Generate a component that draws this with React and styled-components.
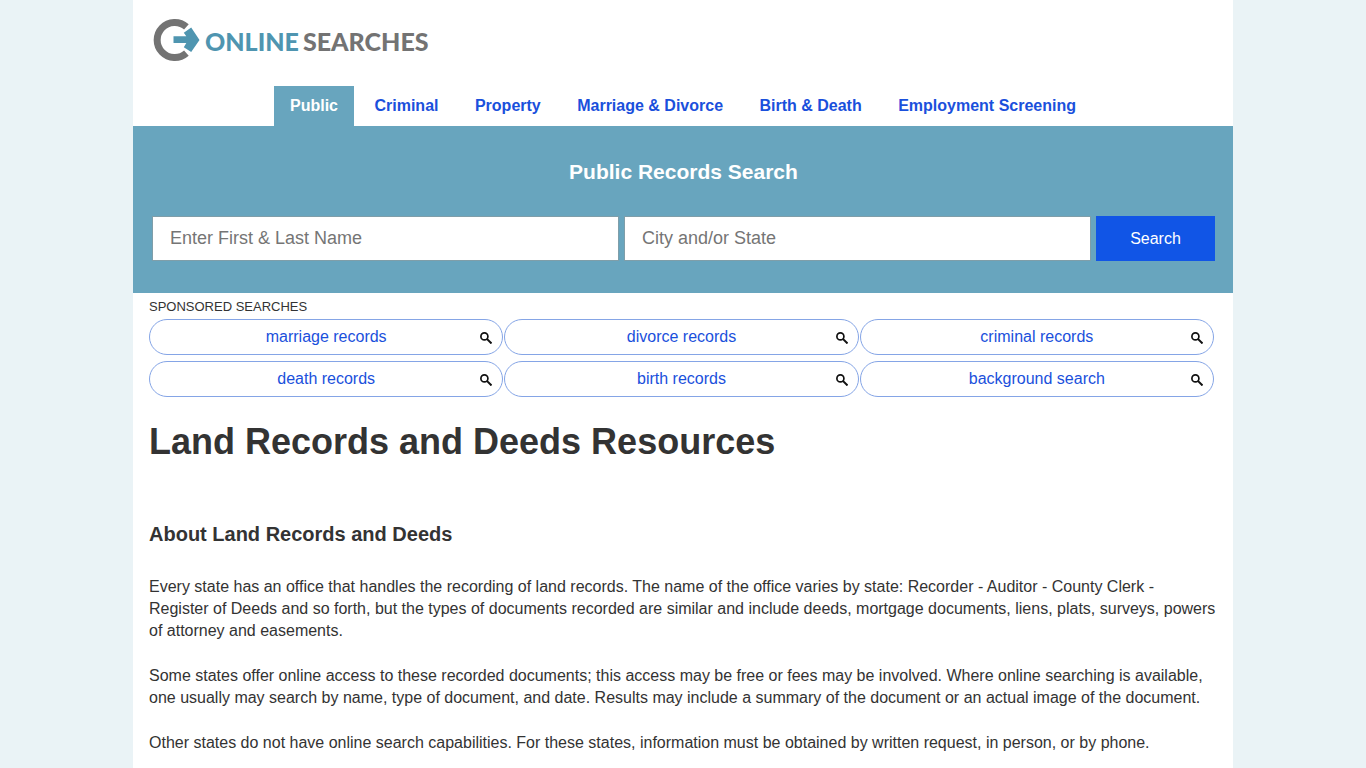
import React from "react";
import styled, { createGlobalStyle } from "styled-components";

const tabs = ["Public", "Criminal", "Property", "Marriage & Divorce", "Birth & Death", "Employment Screening"];

const sponsored = [
  "marriage records",
  "divorce records",
  "criminal records",
  "death records",
  "birth records",
  "background search",
];

const Logo = () => (
  <LogoLink href="#" aria-label="Online Searches">
    <svg width="48" height="44" viewBox="0 0 48 44" aria-hidden="true">
      <path d="M33.400 8.800A17.600 17.600 0 1 0 33.400 35.200" fill="none" stroke="#737373" strokeWidth="7" />
      <path d="M20.500 18.300H33.300L30.800 14.800L38.200 9.500L46.500 22L38.200 34L30.800 29.200L33.300 25H20.500z" fill="#4f95b0" />
    </svg>
    <LogoText>
      <span>ONLINE</span>
      SEARCHES
    </LogoText>
  </LogoLink>
);

const SearchIcon = () => (
  <svg width="12" height="12" viewBox="0 0 12 12" fill="none" stroke="#111" aria-hidden="true">
    <circle cx="4.400" cy="4.400" r="3.500" strokeWidth="1.700" />
    <path d="M6.900 6.900L11.500 11.500" strokeWidth="2" />
  </svg>
);

export default function App() {
  return (
    <>
      <GlobalStyle />
      <Page>
        <Header>
          <Logo />
          <nav>
            <TabList>
              {tabs.map((tab, i) => (
                <React.Fragment key={tab}>
                  <Tab>
                    <TabLink href="#" $active={i === 0}>
                      {tab}
                    </TabLink>
                  </Tab>{" "}
                </React.Fragment>
              ))}
            </TabList>
          </nav>
        </Header>
        <SearchBand>
          <SearchTitle>Public Records Search</SearchTitle>
          <SearchForm onSubmit={(e) => e.preventDefault()}>
            <SearchInput type="text" aria-label="Enter First & Last Name" placeholder="Enter First & Last Name" />
            <SearchInput type="text" aria-label="City and/or State" placeholder="City and/or State" />
            <SearchButton type="submit">Search</SearchButton>
          </SearchForm>
        </SearchBand>
        <Sponsored>
          <SponsoredLabel>SPONSORED SEARCHES</SponsoredLabel>
          <PillGrid>
            {sponsored.map((item) => (
              <Pill href="#" key={item}>
                <span>{item}</span>
                <SearchIcon />
              </Pill>
            ))}
          </PillGrid>
        </Sponsored>
        <Article>
          <h1>Land Records and Deeds Resources</h1>
          <h2>About Land Records and Deeds</h2>
          <p>
            Every state has an office that handles the recording of land records. The name of the office varies by
            state: Recorder - Auditor - County Clerk - Register of Deeds and so forth, but the types of documents
            recorded are similar and include deeds, mortgage documents, liens, plats, surveys, powers of attorney and
            easements.
          </p>
          <p>
            Some states offer online access to these recorded documents; this access may be free or fees may be
            involved. Where online searching is available, one usually may search by name, type of document, and date.
            Results may include a summary of the document or an actual image of the document.
          </p>
          <p>
            Other states do not have online search capabilities. For these states, information must be obtained by
            written request, in person, or by phone.
          </p>
        </Article>
      </Page>
    </>
  );
}

const GlobalStyle = createGlobalStyle`
  * {
    box-sizing: border-box;
  }
  body {
    margin: 0;
    background: #eaf3f6;
    color: #333;
    font-family: "Liberation Sans", Arial, sans-serif;
    font-size: 16px;
    line-height: 22px;
  }
`;

const Page = styled.div`
  max-width: 1100px;
  min-height: 100vh;
  margin: 0 auto;
  background: #fff;
`;

const Header = styled.header`
  padding-top: 18px;
`;

const LogoLink = styled.a`
  display: inline-flex;
  align-items: center;
  gap: 4px;
  height: 44px;
  margin: 0 20px 24px;
  text-decoration: none;
`;

const LogoText = styled.span`
  display: flex;
  gap: 4px;
  padding-top: 2px;
  color: #737373;
  font-family: Lato, sans-serif;
  font-size: 25px;
  font-weight: 900;
  line-height: 32px;
  span {
    color: #4f95b0;
  }
`;

const TabList = styled.ul`
  margin: 0;
  padding: 0;
  list-style: none;
  text-align: center;
`;

const Tab = styled.li`
  display: inline-block;
  vertical-align: top;
`;

const TabLink = styled.a`
  display: block;
  padding: 0 16px;
  line-height: 40px;
  font-weight: bold;
  text-decoration: none;
  color: ${({ $active }) => ($active ? "#fff" : "#1a50dc")};
  background: ${({ $active }) => ($active ? "#68a5be" : "transparent")};
`;

const SearchBand = styled.section`
  padding: 32px 18px 32px 19px;
  background: #68a5be;
`;

const SearchTitle = styled.h2`
  margin: 0 0 30px;
  color: #fff;
  font-size: 21px;
  line-height: 28px;
  text-align: center;
`;

const SearchForm = styled.form`
  display: flex;
  gap: 5px;
`;

const SearchInput = styled.input`
  flex: 1;
  min-width: 0;
  height: 45px;
  padding: 0 17px;
  border: 1px solid #7f9ea9;
  border-radius: 0;
  background: #fff;
  font-family: inherit;
  font-size: 18px;
  &::placeholder {
    color: #757575;
  }
`;

const SearchButton = styled.button`
  width: 119px;
  height: 45px;
  padding: 0;
  border: 0;
  background: #1155e6;
  color: #fff;
  font-family: inherit;
  font-size: 16px;
`;

const Sponsored = styled.section`
  padding: 4px 19px 0 16px;
`;

const SponsoredLabel = styled.div`
  margin-bottom: 2px;
  font-size: 13px;
  line-height: 20px;
`;

const PillGrid = styled.div`
  display: grid;
  grid-template-columns: repeat(3, 1fr);
  gap: 6px 1px;
`;

const Pill = styled.a`
  display: grid;
  grid-template-columns: 12px 1fr 12px;
  align-items: center;
  height: 36px;
  padding: 0 10px;
  border: 1px solid #85a5e6;
  border-radius: 18px;
  color: #1a50dc;
  text-align: center;
  text-decoration: none;
  span {
    grid-column: 2;
  }
  svg {
    margin-top: 2px;
  }
`;

const Article = styled.article`
  padding: 0 16px 24px;
  h1 {
    margin: 20px 0 53px;
    font-size: 36px;
    line-height: 50px;
  }
  h2 {
    margin: 0 0 28px;
    font-size: 20px;
    line-height: 28px;
  }
  p {
    margin: 0 0 23px;
  }
`;
